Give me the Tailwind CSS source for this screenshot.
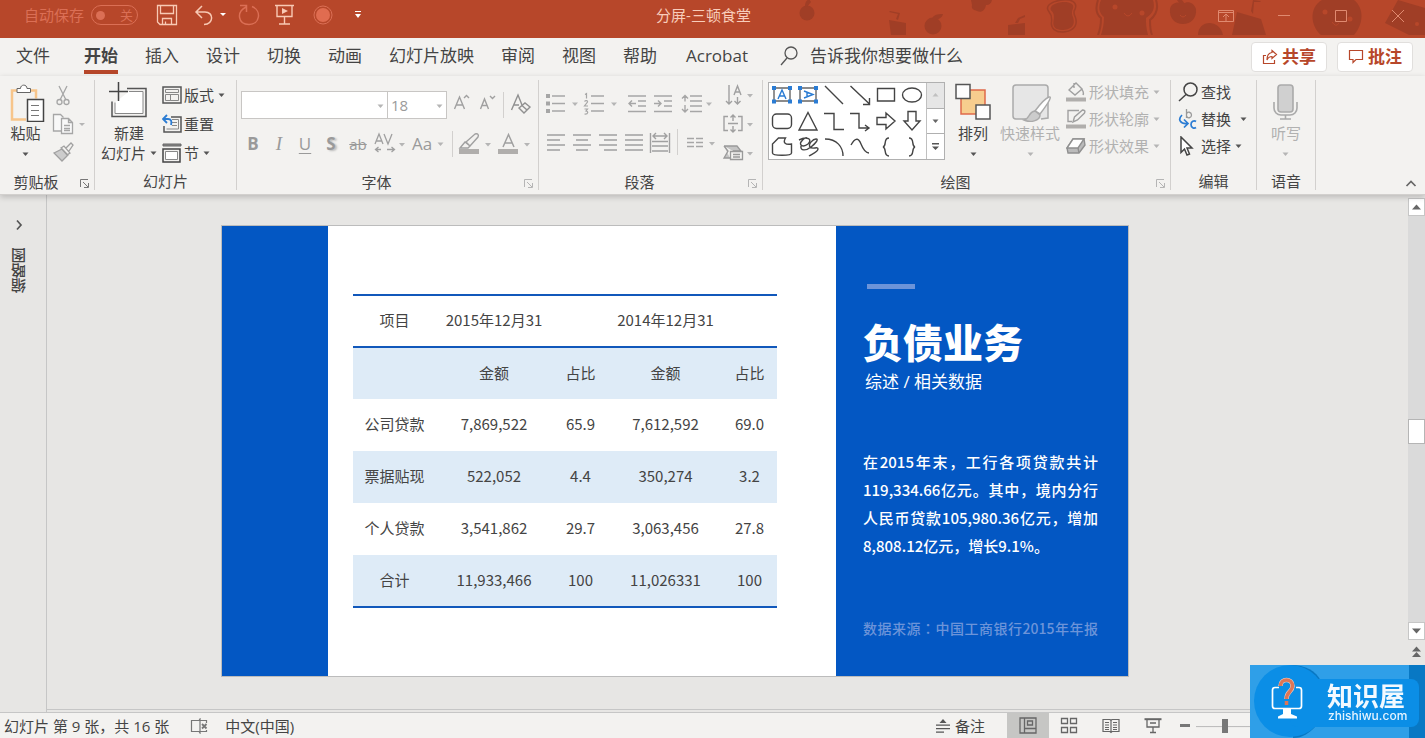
<!DOCTYPE html>
<html lang="zh-CN">
<head>
<meta charset="utf-8">
<meta name="viewport" content="width=device-width, initial-scale=1">
<title>分屏-三顿食堂</title>
<script src="https://cdn.jsdelivr.net/npm/@tailwindcss/browser@4"></script>
</head>
<body class="h-screen overflow-hidden flex flex-col bg-[#e7e6e4] text-[15px] leading-5 text-[#444444] font-['Open_Sans','Noto_Sans_CJK_SC',sans-serif]">

<!-- Title bar -->
<header class="relative h-[38px] shrink-0 bg-[#b7472a]">
  <svg class="absolute right-0 top-0" width="665" height="35" viewBox="760 0 665 35" fill="#a03e26" aria-hidden="true">
    <circle cx="807" cy="13" r="7.500"/><path d="M805 6c0-4 2-6 4-7l2 3-4 5z"/>
    <path d="M889 20l17 3v12h-15zM896 19l2-5-9-2 1-1 10 2-2 7z"/>
    <circle cx="933" cy="26" r="8.500"/><path d="M932 19c1-4 5-5 11-5-1 4-5 6-10 6z"/>
    <path d="M971 0h21c-1 4-3 5-6 5-1 6-5 8-9 6-3-1-6-2-5-6z"/>
    <path d="M1008 25l17-2v12h-17zM1015 23l3-5 7-3v2l-5 2-2 4z"/>
    <g transform="rotate(-8 1063 17)"><path d="M1050 10c-4-6 3-10 13-10s17 4 13 11c-2 2-2 4-1 7 2 8-2 14-12 14s-14-6-12-12c1-4 1-7-1-10z" fill="none" stroke="#a03e26" stroke-width="1.500"/><path d="M1053 10c-4-5 3-8 10-8s14 3 11 8c-2 3-2 6-1 9 1 7-2 11-10 11s-12-4-10-10c1-4 2-7 0-10z"/></g>
    <path d="M1101 0c-3 7-2 13 3 17 0 6-1 12-3 18h47c-2-7-2-12-2-17 8-5 9-11 7-18z"/>
    <path d="M1098 0c-3 9-1 15 3 18 0 6-1 12-3 17M1156 0c3 9 0 15-6 20 0 6 0 10 2 15" fill="none" stroke="#a03e26" stroke-width="2"/>
    <circle cx="1115" cy="7" r="2.500" fill="#b7472a"/><circle cx="1142" cy="13" r="2.500" fill="#b7472a"/><path d="M1124 13q4 6 8 0" fill="none" stroke="#b7472a"/>
    <path d="M1183 4c5-4 11-1 13 5 1 9-5 15-13 15s-14-6-13-15c1-6 8-8 13-5zM1180 4l-3-4h5l3 4z"/><path d="M1180 15q3 4 6 0" fill="none" stroke="#b7472a"/>
    <path d="M1198 35c0-16 22-16 25 0z"/><path d="M1237 12l24 7 5 16h-34zM1251 11l2-11 8 1-1 1-6 0-1 12z"/>
    <path d="M1322 0c-14 8-11 27-1 35h33c10-12 10-27 0-35z"/><circle cx="1325" cy="12" r="2.500" fill="#b7472a"/><circle cx="1350" cy="19" r="2.500" fill="#b7472a"/><path d="M1332 22q4 6 7 1" fill="none" stroke="#b7472a"/>
    <path d="M1398 0l27 8v27h-16l-24-12z"/><circle cx="1417" cy="24" r="2" fill="#b7472a"/>
  </svg>
  <div class="relative grid h-[30px] grid-cols-[1fr_auto_1fr] items-center">
    <div class="flex items-center pl-6">
      <label id="autosave" class="w-[67px] text-[#db6f55]">自动保存</label>
      <button role="switch" aria-checked="false" aria-labelledby="autosave" class="flex h-5 w-[47px] items-center justify-between rounded-full border border-[#db6f55] pl-1 pr-1 text-[13px] leading-4 text-[#db6f55]"><span class="size-[9px] rounded-full bg-[#db6f55]"></span>关</button>
      <button aria-label="保存" class="ml-[18px]"><svg width="22" height="22" viewBox="0 0 22 22" fill="none" stroke="#f8c9b4" stroke-width="1.300"><path d="M1.500 1.500h19v19h-16.500l-2.500-2.500zM4.500 1.500v8h13v-8M6.500 20.500v-6h9v6M9.500 20.500v-3"/></svg></button>
      <button aria-label="撤消" class="ml-4 flex items-center"><svg width="34" height="22" viewBox="0 0 34 22" fill="none" stroke="#f8c9b4" stroke-width="1.500"><path d="M8 2L2 8l6 6M2 8h9c9 0 9 12-1 12.500"/><path d="M26 9h6l-3 3z" fill="#fff" stroke="none"/></svg></button>
      <button aria-label="恢复" class="ml-[10px]"><svg width="22" height="22" viewBox="0 0 22 22" fill="none" stroke="#db6f55" stroke-width="1.500"><path d="M2 1.500h6.500V8M14 2.500c10 4 8 18-3 18S-2 8 8 3"/></svg></button>
      <button aria-label="从头开始" class="ml-[14px]"><svg width="22" height="22" viewBox="0 0 22 22" fill="none" stroke="#f8c9b4" stroke-width="1.400"><path d="M1 1.500h19M3 1.500v11h15v-11M10.500 12.500v7M5 20h11"/><path d="M8 4l6 3-6 3z" fill="#f8c9b4" stroke="none"/></svg></button>
      <button aria-label="录制" class="ml-[17px]"><svg width="20" height="20" viewBox="0 0 20 20"><circle cx="10" cy="10" r="9" fill="none" stroke="#db6f55"/><circle cx="10" cy="10" r="7" fill="#e06c50"/></svg></button>
      <button aria-label="自定义快速访问工具栏" class="ml-[21px]"><svg width="8" height="8" viewBox="0 0 8 8" fill="#fff"><path d="M1 0h6v1H1zM1 3h6L4 7z"/></svg></button>
    </div>
    <h1 class="pr-[18px] text-[#f8cdbb]">分屏-三顿食堂</h1>
    <div class="flex justify-end gap-[43px] pr-5 pt-[1px]">
      <button aria-label="功能区显示选项"><svg width="16" height="14" viewBox="0 0 16 14" fill="none" stroke="#e08a70"><path d="M.500 1.500h15v11H.500zM.500 3.500h15M8 12V5M5 8l3-3 3 3"/></svg></button>
      <button aria-label="最小化"><svg width="14" height="14" viewBox="0 0 14 14" stroke="#e08a70"><path d="M1 6.500h12"/></svg></button>
      <button aria-label="最大化"><svg width="14" height="14" viewBox="0 0 14 14" fill="none" stroke="#e08a70"><path d="M1.500 1.500h11v11h-11z"/></svg></button>
      <button aria-label="关闭"><svg width="14" height="14" viewBox="0 0 14 14" stroke="#e08a70"><path d="M1 1l12 12M13 1L1 13"/></svg></button>
    </div>
  </div>
</header>

<!-- Ribbon tabs -->
<div class="flex h-[38px] shrink-0 items-start justify-between bg-[#f3f2f0] pl-4 pr-3">
  <nav class="flex h-9 gap-[27px] text-[17px] leading-7">
    <button class="mr-[7px]">文件</button>
    <button class="font-bold shadow-[inset_0_-4px_#b7472a]">开始</button>
    <button>插入</button><button>设计</button><button>切换</button><button>动画</button><button>幻灯片放映</button><button>审阅</button><button>视图</button><button>帮助</button><button class="ml-[2px] mr-[5px]">Acrobat</button>
    <button class="flex items-center gap-3"><svg width="18" height="20" viewBox="0 0 18 20" fill="none" stroke="#555" stroke-width="1.300"><circle cx="11" cy="7" r="6"/><path d="M7 12L1 19"/></svg>告诉我你想要做什么</button>
  </nav>
  <div class="mt-1 flex gap-[10px] text-[17px] font-bold leading-7 text-[#b7472a]">
    <button class="flex h-[30px] w-[76px] items-center justify-center gap-1 rounded border border-[#e1dfdd] bg-white"><svg width="16" height="16" viewBox="0 0 16 16" fill="none" stroke="#b7472a" stroke-width="1.200"><path d="M4 6.500H1.500v8h11V11M10 1.500l4.500 4-4.500 4V7.500c-3 0-4 1-5 3.500 0-4 1-7 5-7.500z"/></svg>共享</button>
    <button class="flex h-[30px] w-[76px] items-center justify-center gap-1 rounded border border-[#e1dfdd] bg-white"><svg width="16" height="16" viewBox="0 0 16 16" fill="none" stroke="#b7472a" stroke-width="1.200"><path d="M1.500 1.500h13v9H8l-3 3v-3H1.500z"/></svg>批注</button>
  </div>
</div>

<!-- Ribbon -->
<div class="relative z-10 flex h-[119px] shrink-0 items-stretch border-b border-[#d2d0ce] bg-[#f3f2f0] shadow-[0_2px_6px_rgba(0,0,0,0.2)]">

  <section class="flex w-[94px] flex-col">
    <div class="flex flex-1 gap-1 pl-1 pt-[6px]">
      <button class="flex w-[43px] flex-col items-center"><svg width="43" height="40" viewBox="5 82 43 40" fill="none"><path d="M19 90.500h-6v29h14M31 90.500h6v8" stroke="#f7c58b" stroke-width="2.500"/><path d="M18 92.500v-4h3.500c0-4.500 6.500-4.500 6.500 0h3.500v4z" fill="#fff" stroke="#666"/><path d="M28.500 99.500h16v22h-16z" fill="#fff" stroke="#444" stroke-width="1.500"/><path d="M32 105.500h8M32 110.500h8M32 115.500h8" stroke="#777"/></svg><span class="leading-[22px]">粘贴</span><svg width="7" height="20" viewBox="0 0 7 20" fill="#555"><path d="M.500 8.500h6l-3 3.500z"/></svg></button>
      <div class="flex flex-col">
        <button aria-label="剪切" class="h-7"><svg width="36" height="28" viewBox="51 82 36 28" fill="none" stroke="#a6a6a6" stroke-width="1.300"><path d="M59 86l7 14M67 86l-7 14"/><circle cx="59.500" cy="102" r="2.500"/><circle cx="66.500" cy="102" r="2.500"/></svg></button>
        <button aria-label="复制" class="h-7"><svg width="36" height="28" viewBox="51 110 36 28" fill="#f8f8f8" stroke="#a6a6a6" stroke-width="1.300"><path d="M62 131h-8.500v-16.500h7l3 3"/><path d="M61.500 118.500h7l4 4v11h-11zM68.500 118.500v4h4M64 125.500h6M64 128.500h6M64 130.500h6"/><path d="M79 123h6l-3 3z" fill="#b5b5b5" stroke="none"/></svg></button>
        <button aria-label="格式刷" class="h-7"><svg width="36" height="28" viewBox="51 138 36 28" fill="none" stroke="#a0a0a0" stroke-width="1.300"><path d="M54 153l8-4 6 6-6 6z" fill="#ccc"/><path d="M61 148l3-2 6 7-3 2zM66 148l5-5 2 2-4 6"/></svg></button>
      </div>
    </div>
    <div class="flex h-[25px] items-center"><h2 class="flex-1 text-center">剪贴板</h2><button aria-label="剪贴板选项" class="w-[22px] pl-[6px]"><svg width="14" height="12" viewBox="0 0 14 12" fill="none" stroke="#777"><path d="M2.500 11V3.500H10M5 6l5 5M10.500 7v4.500H6"/></svg></button></div>
  </section>
  <div class="mt-1 h-[110px] w-px bg-[#d2d0ce]"></div>

  <section class="flex w-[141px] flex-col">
    <div class="flex flex-1 gap-1 pl-[5px] pt-[6px]">
      <button class="flex w-[58px] flex-col items-center"><svg width="58" height="40" viewBox="100 82 58 40" fill="none" stroke="#555" stroke-width="1.500"><path d="M127 88.500h19v28h-34v-15" /><path d="M129 91.500h14v22h-28v-11" stroke="#888" fill="#fff" stroke-width="1"/><path d="M118.500 82v19M109 91.500h19" stroke="#444"/></svg><span class="leading-[22px]">新建</span><span class="flex items-center whitespace-nowrap leading-[18px]">幻灯片<svg class="ml-1" width="7" height="8" viewBox="0 0 7 8" fill="#555"><path d="M.500 2.500h6l-3 3.500z"/></svg></span></button>
      <div class="-mt-[2px] flex flex-col">
        <button class="flex h-[29px] items-center"><svg class="mr-[2px]" width="20" height="18" viewBox="0 0 20 18" fill="none" stroke="#555" stroke-width="1.500"><path d="M1 1h18v16H1z"/><path d="M3.500 3.500h13v3h-13zM3.500 8.500h5v6h-5zM8.500 8.500h8v6h-8z" stroke="#888" stroke-width="1"/></svg>版式<svg class="ml-1" width="7" height="8" viewBox="0 0 7 8" fill="#555"><path d="M.500 2.500h6l-3 3.500z"/></svg></button>
        <button class="flex h-[29px] items-center"><svg class="mr-[2px]" width="20" height="20" viewBox="0 0 20 20" fill="none"><path d="M9 3h10v15H2v-6" stroke="#555" stroke-width="1.500"/><path d="M10 5.500h6.500v9.500h-12M10 8.500h5M10 11.500h5" stroke="#888"/><path d="M5 1L1 5l4 4M1 5h5c3 0 4 2 3 6" stroke="#2b7cd3" stroke-width="1.800"/></svg>重置</button>
        <button class="flex h-[29px] items-center"><svg class="mr-[2px]" width="20" height="20" viewBox="0 0 20 20" fill="none"><path d="M1 1h18v2H1z" fill="#888" stroke="#666"/><path d="M1 6h17v13H1z" stroke="#444" stroke-width="1.500"/><path d="M3.500 8.500h12v8h-12z" stroke="#888" fill="#fff"/></svg>节<svg class="ml-1" width="7" height="8" viewBox="0 0 7 8" fill="#555"><path d="M.500 2.500h6l-3 3.500z"/></svg></button>
      </div>
    </div>
    <h2 class="h-[25px] pt-[2px] text-center">幻灯片</h2>
  </section>
  <div class="mt-1 h-[110px] w-px bg-[#d2d0ce]"></div>

  <section class="flex w-[301px] flex-col text-[#444]">
    <div class="flex-1 pl-1 pt-[15px]">
      <div class="flex h-7 items-center">
        <div class="relative"><select aria-label="字体" class="block h-7 w-[147px] appearance-none border border-[#c8c6c4] bg-white px-1"><option></option></select><svg class="pointer-events-none absolute right-1 top-[11px]" width="7" height="8" viewBox="0 0 7 8" fill="#b5b5b5"><path d="M.500 2.500h6l-3 3.500z"/></svg></div>
        <div class="relative -ml-px"><select aria-label="字号" class="block h-7 w-[60px] appearance-none border border-[#c8c6c4] bg-white px-[3px] text-[#9a9a9a]"><option>18</option></select><svg class="pointer-events-none absolute right-1 top-[11px]" width="7" height="8" viewBox="0 0 7 8" fill="#b5b5b5"><path d="M.500 2.500h6l-3 3.500z"/></svg></div>
        <button aria-label="增大字号" class="ml-1"><svg width="24" height="28" viewBox="451 91 24 28" fill="none" stroke="#a0a0a0" stroke-width="1.400"><path d="M454.500 109l5-12 5 12M456.500 105h6.500M464 98l2.500-2.500 2.500 2.500"/></svg></button>
        <button aria-label="减小字号" class="ml-[2px]"><svg width="24" height="28" viewBox="477 91 24 28" fill="none" stroke="#a0a0a0" stroke-width="1.400"><path d="M480.500 109l4-10 4 10M482 105.500h5M490 96l2.500 2.500 2.500-2.500"/></svg></button>
        <span class="ml-[2px] h-[26px] w-px bg-[#d2d0ce]"></span>
        <button aria-label="清除所有格式" class="ml-1"><svg width="26" height="28" viewBox="508 91 26 28" fill="none" stroke="#909090" stroke-width="1.400"><path d="M511.500 110l6.500-15 4 10M514 105h5"/><path d="M519 108l6-5 5 4-6 6zM522 105.500l5 4.500" fill="#f3f2f0"/></svg></button>
      </div>
      <div class="mt-[9px] flex h-8 items-center text-[17px] text-[#9a9a9a]">
        <button class="ml-[3px] w-[18px] font-bold">B</button>
        <button class="ml-2 w-[18px] font-['Liberation_Serif',serif] text-[19px] italic">I</button>
        <button class="ml-2 w-[18px] underline underline-offset-[3px]">U</button>
        <button class="ml-2 w-[18px] font-bold [text-shadow:2px_1px_2px_#bbb]">S</button>
        <button class="ml-[7px] w-[22px] text-[15px] line-through">ab</button>
        <button aria-label="字符间距" class="ml-1"><svg width="34" height="32" viewBox="372 128 34 32" fill="none" stroke="#a0a0a0" stroke-width="1.300"><path d="M374 144l4-10 4 10M375.500 141h5M383 134l4 10 4-10M380 149.500h-5M377.500 147l-3 2.500 3 2.500M386 149.500h7M390.500 147l3 2.500-3 2.500"/><path d="M398 143h6l-3 3.500z" fill="#b5b5b5" stroke="none"/></svg></button>
        <button class="ml-[5px] flex items-center">Aa<svg class="ml-[5px]" width="7" height="8" viewBox="0 0 7 8" fill="#b5b5b5"><path d="M.500 2.500h6l-3 3.500z"/></svg></button>
        <span class="ml-2 h-[26px] w-px bg-[#d2d0ce]"></span>
        <button aria-label="文本突出显示颜色" class="ml-1"><svg width="36" height="32" viewBox="457 128 36 32" fill="none" stroke="#a0a0a0" stroke-width="1.400"><path d="M459 149h20v5h-20z" fill="#b0aeac" stroke="none"/><path d="M466 142l9-8c3-1 4 1 3 3l-8 9zM460 148l5-6 5 4-2 2z"/><path d="M485 143h6l-3 3.500z" fill="#b5b5b5" stroke="none"/></svg></button>
        <button aria-label="字体颜色" class="ml-[3px]"><svg width="36" height="32" viewBox="496 128 36 32" fill="none" stroke="#a0a0a0" stroke-width="1.500"><path d="M498 149h20v5h-20z" fill="#b0aeac" stroke="none"/><path d="M503 147l5.500-12.500L514 147M505 143h7"/><path d="M524 143h6l-3 3.500z" fill="#b5b5b5" stroke="none"/></svg></button>
      </div>
    </div>
    <div class="flex h-[25px] items-center"><h2 class="flex-1 text-center">字体</h2><button aria-label="字体选项" class="w-[22px] pl-[6px]"><svg width="14" height="12" viewBox="0 0 14 12" fill="none" stroke="#b5b5b5"><path d="M2.500 11V3.500H10M5 6l5 5M10.500 7v4.500H6"/></svg></button></div>
  </section>
  <div class="mt-1 h-[110px] w-px bg-[#d2d0ce]"></div>

  <section class="flex w-[223px] flex-col">
    <div class="flex flex-1 pl-[5px]">
      <div class="w-[176px] pt-[13px]">
        <div class="flex h-7">
          <button aria-label="项目符号"><svg width="38" height="28" viewBox="544 89 38 28" fill="none" stroke="#a6a6a6" stroke-width="1.400"><path d="M546 94h4v4h-4zM546 101.500h4v4h-4zM546 109h4v4h-4z" fill="#a6a6a6" stroke="none"/><path d="M552 96h13M552 103.500h13M552 111h13"/><path d="M572 102.500h6l-3 3.500z" fill="#b5b5b5" stroke="none"/></svg></button>
          <button aria-label="编号"><svg width="40" height="28" viewBox="582 89 40 28" fill="none" stroke="#a6a6a6" stroke-width="1.400"><path d="M591 96h13M591 103.500h13M591 111h13"/><path d="M611 102.500h6l-3 3.500z" fill="#b5b5b5" stroke="none"/><path d="M585 94.500l1.500-1v5M584.500 101.500c1-1.500 3.500-1 3 .5l-3 4h3.500M584.500 109h3l-1.500 2c2.500 0 2.500 3.500-1.500 3" stroke-width="1.200"/></svg></button>
          <button aria-label="减少缩进"><svg width="28" height="28" viewBox="622 89 28 28" fill="none" stroke="#a6a6a6" stroke-width="1.400"><path d="M628 96h18M638 101h8M638 106h8M628 111.500h18M636 103.500h-7M632 100.500l-3 3 3 3"/></svg></button>
          <button aria-label="增加缩进"><svg width="28" height="28" viewBox="650 89 28 28" fill="none" stroke="#a6a6a6" stroke-width="1.400"><path d="M654 96h18M664 101h8M664 106h8M654 111.500h18M654 103.500h7M658 100.500l3 3-3 3"/></svg></button>
          <button aria-label="行距"><svg width="40" height="28" viewBox="678 89 40 28" fill="none" stroke="#a6a6a6" stroke-width="1.400"><path d="M690 96h12M690 101h12M690 106h12M690 111.500h12M685 95.500v6M682 98.500l3-3 3 3M685 105v7M682 109l3 3 3-3"/><path d="M706 102.500h6l-3 3.500z" fill="#b5b5b5" stroke="none"/></svg></button>
        </div>
        <div class="mt-3 flex h-7">
          <button aria-label="左对齐"><svg width="26" height="28" viewBox="544 129 26 28" stroke="#a0a0a0" stroke-width="1.500"><path d="M547 135h18M547 140h13M547 145h18M547 150h13"/></svg></button>
          <button aria-label="居中"><svg width="26" height="28" viewBox="570 129 26 28" stroke="#a0a0a0" stroke-width="1.500"><path d="M573 135h18M576 140h12M573 145h18M576 150h12"/></svg></button>
          <button aria-label="右对齐"><svg width="26" height="28" viewBox="596 129 26 28" stroke="#a0a0a0" stroke-width="1.500"><path d="M599 135h18M604 140h13M599 145h18M604 150h13"/></svg></button>
          <button aria-label="两端对齐"><svg width="26" height="28" viewBox="622 129 26 28" stroke="#a0a0a0" stroke-width="1.500"><path d="M625 135h18M625 140h18M625 145h18M625 150h18"/></svg></button>
          <button aria-label="分散对齐"><svg width="26" height="28" viewBox="648 129 26 28" fill="none" stroke="#a0a0a0" stroke-width="1.400"><path d="M650.500 133v20M669.500 133v20M653 136h14M656 133l-3 3 3 3M664 133l3 3-3 3M652 141.500h16M652 146h16M652 151h16"/></svg></button>
          <span class="ml-[3px] h-[26px] w-px bg-[#d2d0ce]"></span>
          <button aria-label="分栏" class="ml-1"><svg width="36" height="28" viewBox="682 129 36 28" stroke="#a6a6a6" stroke-width="1.300"><path d="M687 138.500h7M687 142.500h7M687 146.500h7M696 138.500h7M696 142.500h7M696 146.500h7"/><path d="M709 142h6l-3 3.500z" fill="#b5b5b5" stroke="none"/></svg></button>
        </div>
      </div>
      <div class="flex flex-col pt-[5px]">
        <button aria-label="文字方向" class="h-[29px]"><svg width="36" height="29" viewBox="720 81 36 29" fill="none" stroke="#a0a0a0" stroke-width="1.400"><path d="M729 85v19M726 101l3 3 3-3M737.500 97v7M734.500 101l3 3 3-3M734 95l3.500-9 3.500 9M735 92h5"/><path d="M747 94h6l-3 3.500z" fill="#b5b5b5" stroke="none"/></svg></button>
        <button aria-label="对齐文本" class="h-[29px]"><svg width="36" height="29" viewBox="720 110 36 29" fill="none" stroke="#a0a0a0" stroke-width="1.400"><path d="M728 116.500h-4v14h4M738 116.500h4v14h-4M728 123.500h10M733 121v-6M730.500 117.500l2.500-2.500 2.500 2.500M733 126v6M730.500 129.500l2.500 2.500 2.500-2.500"/><path d="M747 123h6l-3 3.500z" fill="#b5b5b5" stroke="none"/></svg></button>
        <button aria-label="转换为 SmartArt" class="h-[29px]"><svg width="36" height="29" viewBox="720 139 36 29" fill="none" stroke="#999" stroke-width="1.300"><path d="M724 146h13l4 5h-8M724 146l4 5-4 7h6" fill="#c4c4c4"/><path d="M730.500 151.500h12v8h-12z" fill="#f3f2f0"/><path d="M733 154.500h7M733 157h7"/><path d="M747 152h6l-3 3.500z" fill="#b5b5b5" stroke="none"/></svg></button>
      </div>
    </div>
    <div class="flex h-[25px] items-center"><h2 class="flex-1 text-center">段落</h2><button aria-label="段落选项" class="w-[22px] pl-[6px]"><svg width="14" height="12" viewBox="0 0 14 12" fill="none" stroke="#b5b5b5"><path d="M2.500 11V3.500H10M5 6l5 5M10.500 7v4.500H6"/></svg></button></div>
  </section>
  <div class="mt-1 h-[110px] w-px bg-[#d2d0ce]"></div>

  <section class="flex w-[407px] flex-col">
    <div class="flex flex-1 pl-[5px] pt-[6px]">
      <div class="flex h-[78px] w-[177px] border border-[#b0b0b0] bg-white">
        <svg role="img" aria-label="形状" width="157" height="76" viewBox="769 83 157 76" fill="none" stroke="#444" stroke-width="1.400">
          <path d="M774 88h16v13h-16zM800 88h16v13h-16z" stroke="#666"/>
          <g fill="#2b7cd3" stroke="none"><path d="M772 86h4v4h-4zM788 86h4v4h-4zM772 99.500h4v4h-4zM788 99.500h4v4h-4zM798 86h4v4h-4zM814 86h4v4h-4zM798 99.500h4v4h-4zM814 99.500h4v4h-4z"/></g>
          <path d="M778 99l4-9 4 9M779.500 96h5M804 91l9 3.500-9 3.500M807 92.500v4" stroke="#2b7cd3"/>
          <path d="M825 86l18 18M850.500 86l19 18M869.500 98v6.500H863"/>
          <path d="M877.500 88.500h17v12.500h-17z"/><ellipse cx="912" cy="95" rx="9.500" ry="7"/>
          <rect x="772.500" y="114" width="19" height="14.500" rx="4"/><path d="M808 112.500l9 17.500h-18zM824 113.500h10v16h10M850 113.500h9v14.500h9M865 125l4 3-4 3"/>
          <path d="M877 117.500h9v-4.500l9 8-9 8v-4.500h-9zM908 111.500h8v9.500h4l-8 9-8-9h4z"/>
          <path d="M772.500 153v-9l6-6h7c-3 5 0 7 6 6v9c0 3-19 3-19 0z"/>
          <path d="M799 140c8-4 14-1 9 4-5 4-9 1-7-2s5-5 6-4M801 146c-1 5 5 5 10 1s8-8 5-8-8 5-6 8 8-1 8 2-6 5-9 7"/>
          <path d="M825 139c12 0 18 8 18 17M851 145c5-9 8-6 10-1s4 9 8 9"/>
          <path d="M889 138c-6 0-2 8-6 9 4 1 0 9 6 9M909 138c6 0 2 8 6 9-4 1 0 9-6 9"/>
        </svg>
        <div class="flex flex-1 flex-col divide-y divide-[#b0b0b0] border-l border-[#c0c0c0]">
          <button aria-label="上一行" class="flex flex-1 items-center justify-center bg-[#e6e6e6]"><svg width="7" height="8" viewBox="0 0 7 8" fill="#c0c0c0"><path d="M.500 5.500h6l-3-3.500z"/></svg></button>
          <button aria-label="下一行" class="flex flex-1 items-center justify-center"><svg width="7" height="8" viewBox="0 0 7 8" fill="#666"><path d="M.500 2.500h6l-3 3.500z"/></svg></button>
          <button aria-label="其他形状" class="flex flex-1 items-center justify-center"><svg width="9" height="8" viewBox="0 0 9 8" fill="#555"><path d="M1 0h7v1.500H1zM1 3.500h7L4.500 7z"/></svg></button>
        </div>
      </div>
      <button class="ml-[7px] flex w-[42px] flex-col items-center"><svg width="42" height="40" viewBox="952 82 42 40"><path d="M961 90h24v24h-24z" fill="#f7cd8e" stroke="#e0694a" stroke-width="1.500"/><path d="M956 84.500h14v14h-14zM976 105h14v14h-14z" fill="#fdfdfd" stroke="#555" stroke-width="1.500"/></svg><span class="leading-[22px]">排列</span><svg width="7" height="20" viewBox="0 0 7 20" fill="#555"><path d="M.500 8.500h6l-3 3.500z"/></svg></button>
      <button class="ml-[5px] flex w-[62px] flex-col items-center text-[#b1b1b1]"><svg width="62" height="40" viewBox="999 82 62 40" fill="none" stroke="#aaa" stroke-width="1.500"><path d="M1026 119h-10a3 3 0 0 1-3-3V88a3 3 0 0 1 3-3h29a3 3 0 0 1 3 3v30l-7 1" fill="#e6e6e6"/><path d="M1049 97c3-1 1 4-9 17l-5-3c6-8 11-13 14-14z" fill="#fff"/><path d="M1035 111l5 4c0 6-10 8-16 5 6-1 4-8 11-9z" fill="#ccc"/></svg><span class="leading-[22px]">快速样式</span><svg width="7" height="20" viewBox="0 0 7 20" fill="#b5b5b5"><path d="M.500 8.500h6l-3 3.500z"/></svg></button>
      <div class="-mt-1 ml-[5px] flex flex-col text-[#b1b1b1]">
        <button class="flex h-[27px] items-center"><svg class="mr-[3px]" width="20" height="22" viewBox="0 0 20 22" fill="none" stroke="#a0a0a0" stroke-width="1.400"><path d="M0 16.500h20v4H0z" fill="#b0aeac" stroke="none"/><path d="M3 9l7-7 6 6-7 6zM8 2v5M15 8c2 1 3 4 2 6"/></svg>形状填充<svg class="ml-1" width="7" height="8" viewBox="0 0 7 8" fill="#b5b5b5"><path d="M.500 2.500h6l-3 3.500z"/></svg></button>
        <button class="flex h-[27px] items-center"><svg class="mr-[3px]" width="20" height="22" viewBox="0 0 20 22" fill="none" stroke="#a0a0a0" stroke-width="1.400"><path d="M0 16.500h20v4H0z" fill="#b0aeac" stroke="none"/><path d="M13 2.500H2v11h4M7 14l1.500-5 8-7c2 0 3 1 2 3l-7 7z"/></svg>形状轮廓<svg class="ml-1" width="7" height="8" viewBox="0 0 7 8" fill="#b5b5b5"><path d="M.500 2.500h6l-3 3.500z"/></svg></button>
        <button class="flex h-[27px] items-center"><svg class="mr-[3px]" width="20" height="18" viewBox="0 0 20 18" fill="#fff" stroke="#909090" stroke-width="1.400"><path d="M7 2h11l1 6-6 8H2l-1-5z" fill="#bbb"/><path d="M7 2h11l-6 9H1z"/><path d="M12 11l1 5"/></svg>形状效果<svg class="ml-1" width="7" height="8" viewBox="0 0 7 8" fill="#b5b5b5"><path d="M.500 2.500h6l-3 3.500z"/></svg></button>
      </div>
    </div>
    <div class="flex h-[25px] items-center"><h2 class="flex-1 text-center">绘图</h2><button aria-label="绘图选项" class="w-[22px] pl-[6px]"><svg width="14" height="12" viewBox="0 0 14 12" fill="none" stroke="#b5b5b5"><path d="M2.500 11V3.500H10M5 6l5 5M10.500 7v4.500H6"/></svg></button></div>
  </section>
  <div class="mt-1 h-[110px] w-px bg-[#d2d0ce]"></div>

  <section class="flex w-[85px] flex-col">
    <div class="flex flex-1 flex-col pl-[7px] pt-[2px]">
      <button class="flex h-[27px] items-center"><svg class="mr-[3px]" width="20" height="20" viewBox="0 0 20 20" fill="none" stroke="#444" stroke-width="1.500"><circle cx="12.500" cy="7.500" r="6.500"/><path d="M8 12.500L1 19"/></svg>查找</button>
      <button class="flex h-[27px] items-center"><svg class="mr-[3px]" width="20" height="22" viewBox="0 0 20 22" fill="none"><path d="M8.500 1v9M8.500 6c1-3 5-2 5 1s-4 4-5 1" stroke="#999" stroke-width="1.300"/><path d="M18 13.500c-2-1.500-5 0-5 3s3 4.500 5 3M4 7c-5 5-1 9 5 8.500M6 11.500l4 4-4 4" stroke="#2b7cd3" stroke-width="1.700"/></svg>替换<svg class="ml-[9px]" width="7" height="8" viewBox="0 0 7 8" fill="#555"><path d="M.500 2.500h6l-3 3.500z"/></svg></button>
      <button class="flex h-[27px] items-center"><svg class="mr-[3px]" width="20" height="20" viewBox="0 0 20 20" fill="#fff" stroke="#444" stroke-width="1.500"><path d="M3 1v15.500l3.500-3.500 2.500 6 2.500-1-2.500-6h5z"/></svg>选择<svg class="ml-1" width="7" height="8" viewBox="0 0 7 8" fill="#555"><path d="M.500 2.500h6l-3 3.500z"/></svg></button>
    </div>
    <h2 class="h-[25px] pt-[2px] text-center">编辑</h2>
  </section>
  <div class="mt-1 h-[110px] w-px bg-[#d2d0ce]"></div>

  <section class="flex w-[58px] flex-col">
    <div class="flex flex-1 justify-center pt-[6px]">
      <button class="flex flex-col items-center text-[#b1b1b1]"><svg width="30" height="40" viewBox="1271 82 30 40" fill="none" stroke="#aaa" stroke-width="1.600"><rect x="1278" y="85" width="15" height="27" rx="3" fill="#d0d0d0"/><path d="M1274 102v6c0 4 3 7 7 7h9c4 0 7-3 7-7v-6M1285.500 115v4M1280 119h11"/></svg><span class="leading-[22px]">听写</span><svg width="7" height="20" viewBox="0 0 7 20" fill="#b5b5b5"><path d="M.500 8.500h6l-3 3.500z"/></svg></button>
    </div>
    <h2 class="h-[25px] pt-[2px] text-center">语音</h2>
  </section>
  <div class="mt-1 h-[110px] w-px bg-[#d2d0ce]"></div>
  <button aria-label="折叠功能区" class="mb-1 ml-auto mr-2 self-end"><svg width="12" height="12" viewBox="0 0 12 12" fill="none" stroke="#666" stroke-width="1.700"><path d="M1.500 8L6 3.500 10.500 8"/></svg></button>
</div>

<!-- Workspace -->
<main class="flex min-h-0 flex-1">
  <aside class="flex w-[47px] shrink-0 flex-col items-center border-r border-[#c6c6c6] pr-2 pt-6">
    <button aria-label="展开缩略图"><svg width="8" height="12" viewBox="0 0 8 12" fill="none" stroke="#555" stroke-width="1.700"><path d="M2 1.500L6 6l-4 4.500"/></svg></button>
    <span class="mt-[17px] rotate-180 font-medium [writing-mode:vertical-rl]">缩略图</span>
  </aside>
  <div class="flex min-w-0 flex-1 flex-col">
    <div class="flex-1 pl-[174px] pt-[30px]">
      <article id="slide" class="flex h-[452px] w-[908px] border border-[#bcbcbc] bg-white font-['Noto_Sans_CJK_SC',sans-serif]">
        <div class="w-[106px] bg-[#0357c3]"></div>
        <div class="flex-1 pl-[25px] pt-[68px]">
          <table class="w-[424px] table-fixed border-collapse border-y-2 border-[#1158bb] text-center text-[15px] leading-5 [&_td]:pb-[2px] [&_th]:pb-[2px]">
            <colgroup><col class="w-[83px]"><col class="w-[116px]"><col class="w-[57px]"><col class="w-[113px]"><col class="w-[55px]"></colgroup>
            <thead><tr class="h-[52px] border-b-2 border-[#1158bb]"><th class="font-normal">项目</th><th class="whitespace-nowrap font-normal">2015年12月31</th><th></th><th class="whitespace-nowrap font-normal">2014年12月31</th><th></th></tr></thead>
            <tbody>
              <tr class="h-[52px] bg-[#deebf7]"><td></td><td>金额</td><td>占比</td><td>金额</td><td>占比</td></tr>
              <tr class="h-[52px]"><td>公司贷款</td><td>7,869,522</td><td>65.9</td><td>7,612,592</td><td>69.0</td></tr>
              <tr class="h-[52px] bg-[#deebf7]"><td>票据贴现</td><td>522,052</td><td>4.4</td><td>350,274</td><td>3.2</td></tr>
              <tr class="h-[52px]"><td>个人贷款</td><td>3,541,862</td><td>29.7</td><td>3,063,456</td><td>27.8</td></tr>
              <tr class="h-[52px] bg-[#deebf7]"><td>合计</td><td>11,933,466</td><td>100</td><td>11,026331</td><td>100</td></tr>
            </tbody>
          </table>
        </div>
        <div class="flex w-[292px] flex-col bg-[#0357c3] pl-[27px] pr-[30px] pt-[58px] text-white">
          <div class="ml-1 h-[5px] w-12 bg-[#6c94d9]"></div>
          <h3 class="mt-7 text-[40px] font-black leading-[48px]">负债业务</h3>
          <p class="pl-[2px] pt-[5px] font-['Open_Sans','Noto_Sans_CJK_SC',sans-serif] text-[17px] leading-6">综述 / 相关数据</p>
          <p class="mt-[54px] text-justify text-[15px] font-medium leading-7">在2015年末，工行各项贷款共计119,334.66亿元。其中，境内分行人民币贷款105,980.36亿元，增加8,808.12亿元，增长9.1%。</p>
          <p lang="zh-TW" class="mt-14 font-['Noto_Sans_CJK_TC',sans-serif] text-sm font-medium leading-6 text-[#6c94d9] [text-align-last:justify]">数据来源：中国工商银行2015年年报</p>
        </div>
      </article>
    </div>
    <div class="h-[3px] border-t border-[#c6c6c6]"></div>
  </div>
  <div class="flex w-[17px] shrink-0 flex-col pt-[3px]" role="scrollbar" aria-label="垂直滚动" aria-valuenow="55" aria-controls="slide">
    <button aria-label="向上滚动" class="flex h-[18px] items-center justify-center border border-[#c6c6c6] bg-white"><svg width="9" height="6" viewBox="0 0 9 6" fill="#666"><path d="M0 5.500h9l-4.500-5z"/></svg></button>
    <div class="flex h-[406px] flex-col bg-[#dadada] pt-[203px]"><div class="h-[25px] border border-[#b5b5b5] bg-white"></div></div>
    <button aria-label="向下滚动" class="flex h-[18px] items-center justify-center border border-[#c6c6c6] bg-white"><svg width="9" height="6" viewBox="0 0 9 6" fill="#666"><path d="M0 .500h9l-4.500 5z"/></svg></button>
    <button aria-label="上一张幻灯片" class="mt-[6px] flex justify-center"><svg width="9" height="12" viewBox="0 0 9 12" fill="#666"><path d="M0 5.500h9l-4.500-5zM0 11h9l-4.500-5z"/></svg></button>
  </div>
</main>

<!-- Status bar -->
<footer class="flex h-[26px] shrink-0 items-center justify-between border-t border-[#c6c6c6] bg-[#f3f2f0] pl-1">
  <div class="flex items-center">
    <span>幻灯片 第 9 张，共 16 张</span>
    <button aria-label="拼写检查" class="ml-[21px]"><svg width="18" height="16" viewBox="0 0 18 16" fill="none" stroke="#777" stroke-width="1.200"><path d="M9 2.500H1.500v11H9l1 1.500V1zM10 2.500h6.500V5M10 13.500h6.500V12"/><path d="M12 6l4.500 4.500M16.500 6L12 10.500" stroke-width="1.800"/></svg></button>
    <button class="ml-[17px]">中文(中国)</button>
  </div>
  <div class="flex h-full items-center">
    <button class="mr-[22px] flex items-center gap-[5px]"><svg width="14" height="14" viewBox="0 0 14 14" fill="#555"><path d="M7 0l3.500 4h-7zM0 5.500h14v1.300H0zM0 9h14v1.300H0zM0 12.500h8v1.300H0z"/></svg>备注</button>
    <button aria-label="普通视图" class="flex h-full w-[42px] items-center justify-center bg-[#c6c6c4]"><svg width="18" height="17" viewBox="0 0 18 17" fill="none" stroke="#666" stroke-width="1.300"><path d="M1 1h16v15H1zM5.500 1v15M5.500 11.500H17M8.500 4h5v4h-5z"/></svg></button>
    <button aria-label="幻灯片浏览" class="flex w-10 justify-center"><svg width="18" height="17" viewBox="0 0 18 17" fill="none" stroke="#666" stroke-width="1.300"><path d="M1.500 1.500h6v5h-6zM10.500 1.500h6v5h-6zM1.500 10.500h6v5h-6zM10.500 10.500h6v5h-6z"/></svg></button>
    <button aria-label="阅读视图" class="flex w-[43px] justify-center"><svg width="18" height="16" viewBox="0 0 18 16" fill="none" stroke="#666" stroke-width="1.200"><path d="M9 2.500L8 1.500H1v12h7l1 1 1-1h7v-12h-7zM9 2.500v12M3 4.500h4M3 7h4M3 9.500h4M3 11.500h4M11 4.500h4M11 7h4M11 9.500h4M11 11.500h4"/></svg></button>
    <button aria-label="幻灯片放映" class="flex w-[42px] justify-center"><svg width="18" height="16" viewBox="0 0 18 16" fill="none" stroke="#666" stroke-width="1.300"><path d="M3 2v7h12V2M6 5h6M9 9v6M6 14.500h6"/><path d="M.500 1.200h17" stroke-width="2"/></svg></button>
    <button aria-label="缩小" class="ml-1 flex w-[14px] justify-center"><span class="h-[3px] w-[10px] bg-[#777]"></span></button>
    <input type="range" aria-label="缩放" min="0" max="100" value="21" class="ml-1 h-4 w-[130px] appearance-none bg-linear-to-b from-transparent from-50% via-[#a6a6a6] via-50% to-transparent to-60% [&::-webkit-slider-thumb]:h-[14px] [&::-webkit-slider-thumb]:w-[6px] [&::-webkit-slider-thumb]:appearance-none [&::-webkit-slider-thumb]:bg-[#777]">
    <span class="w-[99px]"></span>
  </div>
</footer>

<!-- Corner site badge -->
<div class="fixed bottom-0 right-0 z-20">
  <svg class="block" width="175" height="73" viewBox="0 0 175 73">
    <path d="M0 0h175v73H0z" fill="#2f9fe8"/><path d="M159 0h16v73h-16z" fill="#0878c4"/>
    <path d="M40 0c16 0 26 6 31 16l-6 46c-6 6-12 11-22 11z" fill="#0878c4"/>
    <circle cx="40" cy="36" r="36" fill="#0b8ee6"/>
    <rect x="40" y="14" width="129" height="48" rx="8" fill="#0b8ee6"/>
    <path d="M29 22.500h-4a2.500 2.500 0 0 0-2.500 2.500v16a2.500 2.500 0 0 0 2.500 2.500h24a2.500 2.500 0 0 0 2.500-2.500V25a2.500 2.500 0 0 0-2.500-2.500h-3" fill="none" stroke="#fff" stroke-width="1.700"/>
    <path d="M33 43h8v6l6 2.500v2H28v-2l5-2.500z" fill="#fff"/>
    <path d="M30.500 21c0-8 12-8 12 0 0 6-6 5-6 13" fill="none" stroke="#f3d2c4" stroke-width="4.500"/><path d="M30.500 21c0-8 12-8 12 0 0 6-6 5-6 13M36.500 36v4" fill="none" stroke="#dd7657" stroke-width="3.500"/>
    <text x="77" y="41" font-size="26" font-weight="700" fill="#f2f9ff" font-family="Noto Sans CJK SC, sans-serif">知识屋</text>
    <text x="78" y="55" font-size="12" font-weight="500" fill="#e6f4ff" font-family="Inter, sans-serif">zhishiwu.com</text>
  </svg>
</div>
</body>
</html>
